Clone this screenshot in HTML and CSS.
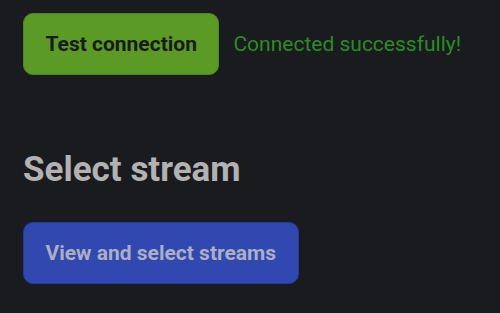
FILE: index.html
```html
<!DOCTYPE html>
<html>
<head>
<meta charset="utf-8">
<link rel="stylesheet" href="styles.css">
</head>
<body>
<main class="page">
  <div class="test-row">
    <button class="btn btn-green">Test connection</button>
    <span class="status">Connected successfully!</span>
  </div>
  <h2 class="heading">Select stream</h2>
  <button class="btn btn-blue">View and select streams</button>
</main>
</body>
</html>
```
FILE: styles.css
```css
html, body {
  margin: 0;
  padding: 0;
  background: #1a1b1e;
  font-family: Roboto, "Liberation Sans", sans-serif;
}
.page {
  padding: 13px 23px;
}
.test-row {
  display: flex;
  align-items: center;
  gap: 14px;
}
.btn {
  display: block;
  font-family: Roboto, "Liberation Sans", sans-serif;
  font-weight: 700;
  font-size: 21px;
  line-height: 24px;
  padding: 18px 21.5px;
  border-radius: 10px;
  cursor: pointer;
}
.btn-green {
  background: #5a9a25;
  border: 1px solid #4e8a1f;
  color: #1a1b1e;
}
.status {
  color: #2a8c24;
  font-size: 21px;
}
.heading {
  margin: 74px 0 0;
  font-size: 35px;
  line-height: 41px;
  font-weight: 700;
  color: #b2b2b2;
}
.btn-blue {
  margin-top: 32px;
  background: #3048b0;
  border: 1px solid #2338a6;
  color: #abafc2;
}
```
